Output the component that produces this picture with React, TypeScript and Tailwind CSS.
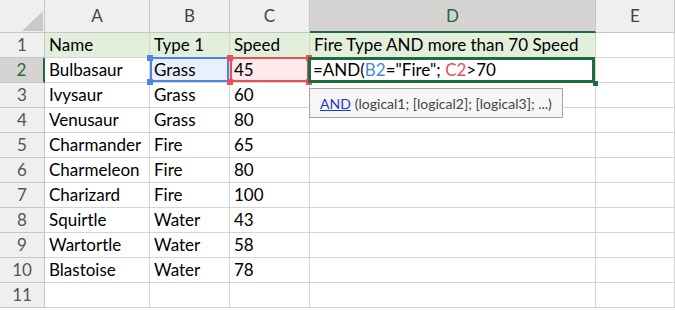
import React from "react";

const cols = ["A", "B", "C", "D", "E"];

const rows: string[][] = [
  ["Name", "Type 1", "Speed", "Fire Type AND more than 70 Speed", ""],
  ["Bulbasaur", "Grass", "45", "", ""],
  ["Ivysaur", "Grass", "60", "", ""],
  ["Venusaur", "Grass", "80", "", ""],
  ["Charmander", "Fire", "65", "", ""],
  ["Charmeleon", "Fire", "80", "", ""],
  ["Charizard", "Fire", "100", "", ""],
  ["Squirtle", "Water", "43", "", ""],
  ["Wartortle", "Water", "58", "", ""],
  ["Blastoise", "Water", "78", "", ""],
  ["", "", "", "", ""],
];

const Handle: React.FC<{ color: string; pos: string }> = ({ color, pos }) => (
  <span className={`absolute w-[6px] h-[6px] ${color} ${pos}`} />
);

const App: React.FC = () => {
  return (
    <div
      className="w-[675px] h-[310px] overflow-hidden bg-white text-black"
      style={{ fontFamily: "Lato, 'Open Sans', sans-serif" }}
    >
      <div className="grid grid-cols-[45px_105px_80px_80px_286px_79px] grid-rows-[33px_repeat(11,25px)]">
        {/* corner */}
        <div className="relative bg-[#efefef] border-r border-b border-[#c6c6c6]">
          <svg className="absolute left-[22px] top-[11px]" width="21" height="20" viewBox="0 0 21 20">
            <polygon points="21,0 21,20 0,20" fill="#c9c9c9" />
          </svg>
        </div>
        {cols.map((c) =>
          c === "D" ? (
            <div
              key={c}
              className="flex items-center justify-center bg-[#d6d4d3] border-r border-[#c6c6c6] border-b-2 border-b-[#1d6b3f] text-[#1d6b3f] text-[17px]"
            >
              {c}
            </div>
          ) : (
            <div
              key={c}
              className="flex items-center justify-center bg-[#efefef] border-r border-b border-[#c6c6c6] text-[#444] text-[17px]"
            >
              {c}
            </div>
          )
        )}

        {rows.map((r, i) => (
          <React.Fragment key={i}>
            {i === 1 ? (
              <div className="flex items-center justify-center bg-[#d6d4d3] border-b border-[#c6c6c6] border-r-2 border-r-[#1d6b3f] text-[#1d6b3f] text-[17px]">
                {i + 1}
              </div>
            ) : (
              <div className="flex items-center justify-center bg-[#efefef] border-r border-b border-[#c6c6c6] text-[#555] text-[17px]">
                {i + 1}
              </div>
            )}
            {r.map((v, j) => {
              const green = i === 0 && j < 4;
              if (i === 1 && j === 1) {
                return (
                  <div key={j} className="relative flex items-center pl-1 bg-[#eaf0fb] border-r border-b border-[#d4d4d4] text-[17px]">
                    <span className="absolute left-0 top-[-1px] right-0 bottom-0 border-2 border-[#4d85e4]" />
                    <Handle color="bg-[#4d85e4]" pos="-left-[3px] -top-[3px]" />
                    <Handle color="bg-[#4d85e4]" pos="-left-[3px] -bottom-[3px]" />
                    <span className="relative">{v}</span>
                  </div>
                );
              }
              if (i === 1 && j === 2) {
                return (
                  <div key={j} className="relative flex items-center pl-1 bg-[#fdebec] border-r border-b border-[#d4d4d4] text-[17px]">
                    <span className="absolute left-0 top-[-1px] right-0 bottom-0 border-2 border-[#e4515b]" />
                    <Handle color="bg-[#e4515b]" pos="-left-[3px] -top-[3px]" />
                    <Handle color="bg-[#e4515b]" pos="-left-[3px] -bottom-[3px]" />
                    <Handle color="bg-[#e4515b]" pos="-right-[3px] -top-[3px]" />
                    <Handle color="bg-[#e4515b]" pos="-right-[3px] -bottom-[3px]" />
                    <span className="relative">{v}</span>
                  </div>
                );
              }
              if (i === 1 && j === 3) {
                return (
                  <div key={j} className="relative z-10 flex items-center pl-[3px] bg-white border-r border-b border-[#d4d4d4] text-[17px]">
                    <span className="absolute -left-[2px] -top-[1px] right-0 -bottom-[1px] border-[3px] border-[#1d6b3f]" />
                    <span className="absolute -right-[3px] -bottom-[4px] w-[5px] h-[5px] bg-[#1d6b3f]" />
                    <span className="relative whitespace-nowrap">
                      =AND(<span className="text-[#4d85e4]">B2</span>="Fire"; <span className="text-[#e4515b]">C2</span>&gt;70
                    </span>
                    {/* function tooltip */}
                    <div className="absolute left-[-1px] top-[30px] w-[254px] h-[30px] flex items-center pl-[10px] bg-[#f6f6f6] border border-[#a3a3a3] text-[14px] text-[#444] whitespace-nowrap">
                      <span className="text-[#1a35d6] underline">AND</span>
                      <span className="ml-[4px]">(logical1; [logical2]; [logical3]; ...)</span>
                    </div>
                  </div>
                );
              }
              return (
                <div
                  key={j}
                  className={`flex items-center pl-1 border-r border-b border-[#d4d4d4] text-[17px] whitespace-nowrap ${
                    green ? "bg-[#e2efda]" : "bg-white"
                  }`}
                >
                  {v}
                </div>
              );
            })}
          </React.Fragment>
        ))}
      </div>
    </div>
  );
};

export default App;
